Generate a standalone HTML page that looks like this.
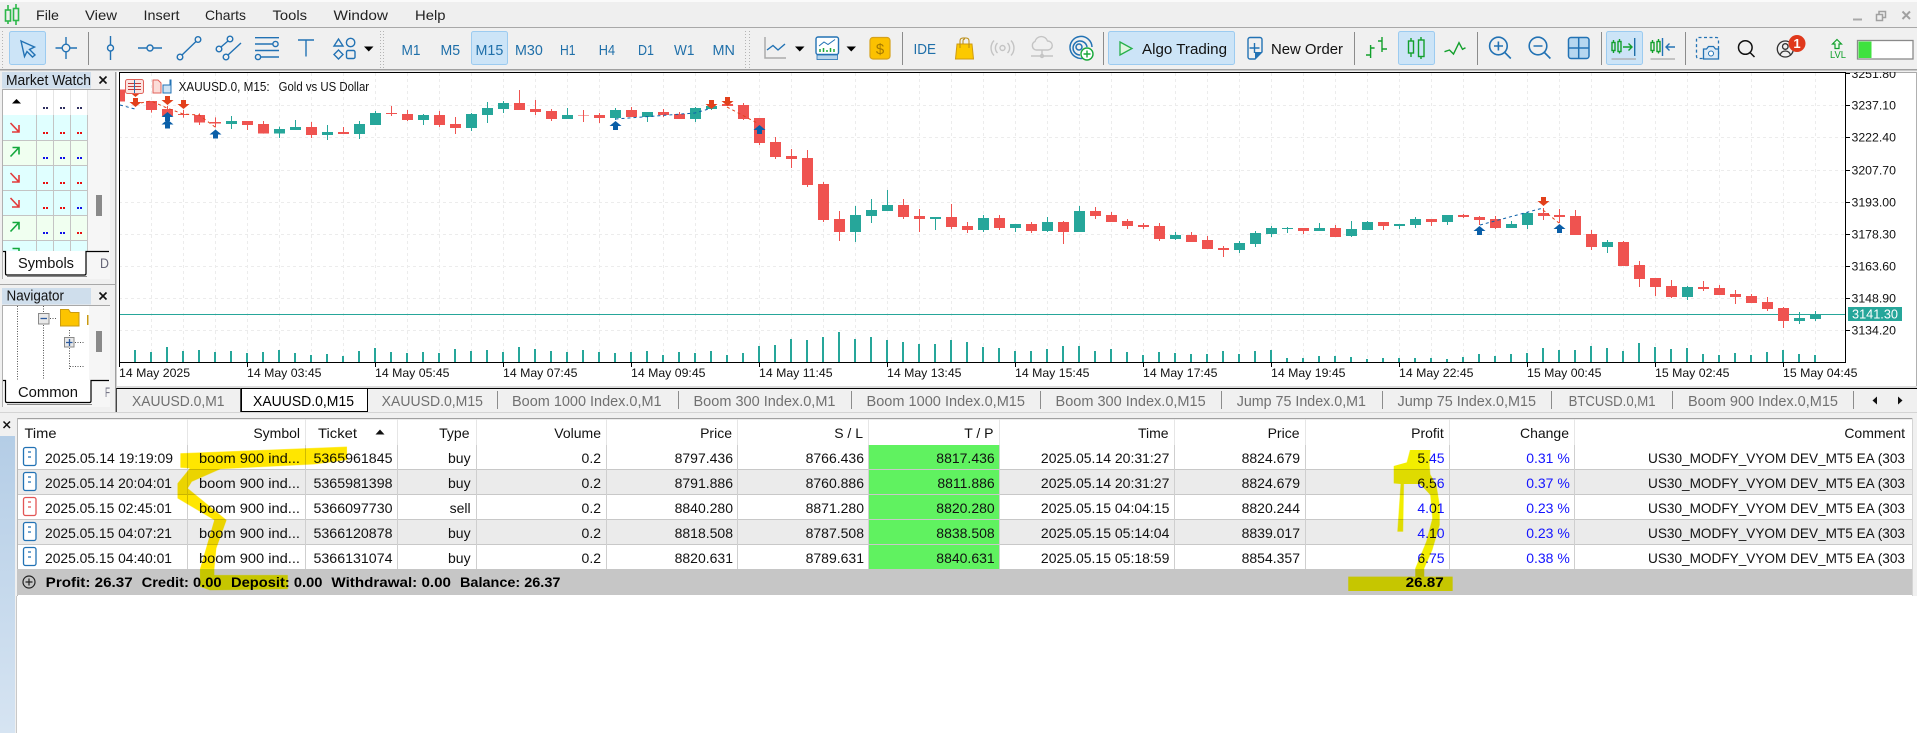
<!DOCTYPE html>
<html lang="en"><head><meta charset="utf-8"><title>MetaTrader 5</title>
<style>
html,body{margin:0;padding:0;background:#fff;overflow:hidden}
svg{display:block}
text{font-family:"Liberation Sans",sans-serif;font-size:14px;fill:#111}
.m{font-size:14px;fill:#222}
.tf{font-size:15px;fill:#1f6fa9}
.ax{font-size:12.3px;fill:#111}
.tab{font-size:14.5px;fill:#707070}
.r{text-anchor:end}
.b{font-weight:bold;fill:#000}
.p{fill:#1414ff}
.i{fill:none;stroke:#2272b4;stroke-width:1.4}
.g{fill:none;stroke:#12a02c;stroke-width:1.4}
</style></head><body>
<svg width="1917" height="733" viewBox="0 0 1917 733" xmlns="http://www.w3.org/2000/svg">
<defs>
<linearGradient id="lg" x1="0" y1="0" x2="0" y2="1"><stop offset="0" stop-color="#b4cde6"/><stop offset="1" stop-color="#d6e4f2"/></linearGradient>
<path id="ad" d="M-2.5 0h5v4h3.500l-6 5-6-5h3.500z" fill="#e2401b"/>
<path id="au" d="M-2.500 9h5v-4h3.500l-6-5-6 5h3.500z" fill="#0a5fa8"/>
<g id="db"><rect x="23.500" y="0.500" width="12.500" height="18" rx="2" fill="#fff" stroke="#2272b4" stroke-width="1.300"/><path d="M28 5h3M28 10h3" stroke="#2272b4" stroke-width="1.300"/></g>
<g id="dr"><rect x="23.500" y="0.500" width="12.500" height="18" rx="2" fill="#fff" stroke="#e25555" stroke-width="1.300"/><path d="M28 5h3M28 10h3" stroke="#e25555" stroke-width="1.300"/></g>
</defs>

<rect width="1917" height="733" fill="#f0f0f0"/>

<!-- chart -->
<rect x="117" y="72" width="1799" height="314" fill="#fff"/>
<g stroke="#ececec" stroke-width="1" stroke-dasharray="3 3">
<path d="M119 105.500H1845M119 137.500H1845M119 170.500H1845M119 202.500H1845M119 234.500H1845M119 266.500H1845M119 298.500H1845M119 330.500H1845"/>
<path d="M151.500 73V362M183.500 73V362M215.500 73V362M247.500 73V362M279.500 73V362M311.500 73V362M343.500 73V362M375.500 73V362M407.500 73V362M439.500 73V362M471.500 73V362M503.500 73V362M535.500 73V362M567.500 73V362M599.500 73V362M631.500 73V362M663.500 73V362M695.500 73V362M727.500 73V362M759.500 73V362M791.500 73V362M823.500 73V362M855.500 73V362M887.500 73V362M919.500 73V362M951.500 73V362M983.500 73V362M1015.500 73V362M1047.500 73V362M1079.500 73V362M1111.500 73V362M1143.500 73V362M1175.500 73V362M1207.500 73V362M1239.500 73V362M1271.500 73V362M1303.500 73V362M1335.500 73V362M1367.500 73V362M1399.500 73V362M1431.500 73V362M1463.500 73V362M1495.500 73V362M1527.500 73V362M1559.500 73V362M1591.500 73V362M1623.500 73V362M1655.500 73V362M1687.500 73V362M1719.500 73V362M1751.500 73V362M1783.500 73V362M1815.500 73V362"/>
</g>
<rect x="119" y="314" width="1726" height="1" fill="#26a69a"/>

<g transform="translate(0,70) scale(1,0.33333)" fill="none" shape-rendering="crispEdges">
<!-- volumes -->
<path stroke="#26a69a" stroke-width="2" d="M135 840V877M151 846V877M167 831V877M183 843V877M199 840V877M215 846V877M231 843V877M247 849V877M263 846V877M279 840V877M295 849V877M311 855V877M327 852V877M343 858V877M359 843V877M375 834V877M391 846V877M407 849V877M423 846V877M439 849V877M455 837V877M471 843V877M487 840V877M503 846V877M519 831V877M535 837V877M551 843V877M567 846V877M583 840V877M599 846V877M615 849V877M631 846V877M647 843V877M663 855V877M679 846V877M695 849V877M711 843V877M727 855V877M743 849V877M759 828V877M775 825V877M791 807V877M807 810V877M823 801V877M839 786V877M855 807V877M871 801V877M887 810V877M903 816V877M919 822V877M935 822V877M951 810V877M967 816V877M983 831V877M999 834V877M1015 843V877M1031 843V877M1047 837V877M1063 828V877M1079 828V877M1095 843V877M1111 837V877M1127 846V877M1143 855V877M1159 846V877M1175 849V877M1191 852V877M1207 852V877M1223 843V877M1239 852V877M1255 843V877M1271 840V877M1287 864V877M1303 864V877M1319 858V877M1335 858V877M1351 861V877M1367 867V877M1383 864V877M1399 864V877M1415 864V877M1431 864V877M1447 867V877M1463 861V877M1479 852V877M1495 858V877M1511 852V877M1527 849V877M1543 834V877M1559 840V877M1575 840V877M1591 828V877M1607 834V877M1623 843V877M1639 819V877M1655 831V877M1671 837V877M1687 834V877M1703 852V877M1719 855V877M1735 849V877M1751 855V877M1767 846V877M1783 840V877M1799 852V877M1815 855V877"/>
<!-- red wicks -->
<path stroke="#ef5350" stroke-width="1" d="M151.500 93V128M167.500 108V138M183.500 120V143M199.500 130V165M215.500 142V172M247.500 153V180M263.500 153V191M311.500 156V204M343.500 171V192M391.500 108V138M407.500 120V153M439.500 123V171M455.500 141V192M519.500 60V120M535.500 90V135M551.500 117V153M583.500 120V156M599.500 129V159M631.500 111V141M663.500 117V141M679.500 126V147M743.500 99V150M759.500 144V225M775.500 201V267M791.500 237V294M807.500 240V351M823.500 336V456M839.500 423V513M903.500 387V447M919.500 417V486M951.500 402V477M967.500 456V489M999.500 435V480M1031.500 456V489M1063.500 453V522M1095.500 411V447M1111.500 426V456M1127.500 447V477M1143.500 459V477M1159.500 459V513M1191.500 486V516M1207.500 498V537M1223.500 528V561M1303.500 474V492M1335.500 465V501M1383.500 456V480M1431.500 447V468M1463.500 432V444M1479.500 438V465M1495.500 438V477M1543.500 414V450M1559.500 417V459M1575.500 420V495M1591.500 480V540M1623.500 513V588M1639.500 573V651M1655.500 624V678M1671.500 630V684M1703.500 633V663M1719.500 645V675M1735.500 660V702M1751.500 672V699M1767.500 681V723M1783.500 711V774"/>
<!-- red bodies -->
<path stroke="#ef5350" stroke-width="11" d="M119.500 58V95M151.500 93V120M167.500 117V138M183.500 132V135M199.500 135V158M215.500 156V161M247.500 153V165M263.500 162V191M311.500 171V195M343.500 186V192M391.500 129V132M407.500 132V150M439.500 135V165M455.500 162V174M519.500 99V120M535.500 117V126M551.500 123V147M583.500 135V137M599.500 135V144M631.500 120V141M663.500 126V135M679.500 132V147M727.500 102V108M743.500 105V147M759.500 144V219M775.500 216V261M791.500 258V267M807.500 264V345M823.500 342V450M839.500 447V486M903.500 405V441M919.500 438V447M951.500 441V471M967.500 468V480M999.500 444V474M1031.500 462V483M1063.500 456V486M1095.500 423V438M1111.500 435V456M1127.500 453V468M1143.500 465V471M1159.500 468V507M1191.500 495V516M1207.500 510V537M1223.500 534V540M1303.500 474V483M1335.500 474V501M1383.500 456V468M1431.500 447V456M1463.500 435V441M1479.500 441V450M1495.500 447V474M1543.500 429V438M1559.500 435V441M1575.500 438V495M1591.500 492V531M1623.500 516V588M1639.500 585V627M1655.500 624V651M1671.500 648V681M1703.500 651V657M1719.500 654V675M1735.500 672V681M1751.500 678V699M1767.500 696V717M1783.500 714V753"/>
<!-- green wicks -->
<path stroke="#26a69a" stroke-width="1" d="M231.500 138V177M279.500 170V204M295.500 150V180M327.500 165V210M359.500 153V207M375.500 123V165M423.500 132V165M471.500 129V183M487.500 96V159M503.500 93V129M567.500 114V147M615.500 114V150M647.500 126V156M695.500 111V156M711.500 105V120M855.500 408V516M871.500 387V459M887.500 360V423M935.500 441V480M983.500 435V486M1015.500 462V486M1047.500 441V486M1079.500 408V486M1175.500 486V510M1239.500 513V549M1255.500 483V531M1271.500 468V501M1287.500 471V489M1319.500 459V483M1351.500 453V501M1367.500 453V480M1399.500 462V477M1415.500 441V474M1447.500 435V465M1511.500 453V474M1527.500 426V477M1607.500 510V549M1687.500 648V690M1799.500 726V762M1815.500 723V753"/>
<!-- green bodies -->
<path stroke="#26a69a" stroke-width="11" d="M231.500 153V162M279.500 177V191M295.500 171V180M327.500 186V195M359.500 162V192M375.500 129V165M423.500 135V150M471.500 132V174M487.500 114V135M503.500 99V117M567.500 135V147M615.500 120V144M647.500 126V141M695.500 114V147M711.500 108V117M855.500 435V486M871.500 420V438M887.500 405V423M935.500 441V447M983.500 444V480M1015.500 462V474M1047.500 456V483M1079.500 423V486M1175.500 495V507M1239.500 519V540M1255.500 489V522M1271.500 474V492M1287.500 474V477M1319.500 474V483M1351.500 477V498M1367.500 456V480M1399.500 462V468M1415.500 447V465M1447.500 435V456M1511.500 462V474M1527.500 429V465M1607.500 516V531M1687.500 651V681M1799.500 744V753M1815.500 735V747"/>
</g>

<!-- trade dashes -->
<g fill="none" stroke-width="1" stroke-dasharray="3 3">
<path stroke="#0a5fa8" d="M120 105L135 109M615.500 119L695 113L712 108M1480 225L1543 208"/>
<path stroke="#e2401b" d="M135 104L151 101L167 108L183 114L199 115L215 127M727 107L759 124M1543 210L1559 223"/>
</g>
<!-- trade arrows -->
<use href="#ad" x="135.500" y="88"/><use href="#ad" x="135.500" y="98"/><use href="#ad" x="167.500" y="96"/><use href="#ad" x="183.500" y="100"/><use href="#ad" x="711.500" y="100"/><use href="#ad" x="727.500" y="97"/><use href="#ad" x="1543.500" y="197"/>
<use href="#au" x="167.500" y="112"/><use href="#au" x="167.500" y="119.500"/><use href="#au" x="215.500" y="129.500"/><use href="#au" x="615.500" y="121"/><use href="#au" x="759.500" y="125"/><use href="#au" x="1479.500" y="226"/><use href="#au" x="1559.500" y="224"/>

<!-- frame -->
<rect x="116" y="72" width="3" height="316" fill="#fff"/>
<rect x="115" y="72" width="1.500" height="340" fill="#a0a0a0"/>
<rect x="119" y="72" width="1" height="290" fill="#000"/>
<rect x="119" y="72" width="1726" height="1" fill="#000"/>
<rect x="1845" y="72" width="1" height="291" fill="#000"/>
<rect x="119" y="362" width="1727" height="1" fill="#000"/>
<path stroke="#000" d="M119.500 362V367M247.500 362V367M375.500 362V367M503.500 362V367M631.500 362V367M759.500 362V367M887.500 362V367M1015.500 362V367M1143.500 362V367M1271.500 362V367M1399.500 362V367M1527.500 362V367M1655.500 362V367M1783.500 362V367M1845 73.500H1850M1845 105.500H1850M1845 137.500H1850M1845 170.500H1850M1845 202.500H1850M1845 234.500H1850M1845 266.500H1850M1845 298.500H1850M1845 330.500H1850"/>
<rect x="1846" y="72" width="70" height="1" fill="#a8a8a8"/>
<rect x="1916" y="72" width="1" height="314" fill="#b0b0b0"/>
<rect x="117" y="386" width="1800" height="2" fill="#dcdcdc"/>

<!-- axis labels -->
<text class="ax" x="1851.500" y="78">3251.80</text><text class="ax" x="1851.500" y="109.500">3237.10</text><text class="ax" x="1851.500" y="141.500">3222.40</text><text class="ax" x="1851.500" y="174.500">3207.70</text><text class="ax" x="1851.500" y="206.500">3193.00</text><text class="ax" x="1851.500" y="238.500">3178.30</text><text class="ax" x="1851.500" y="270.500">3163.60</text><text class="ax" x="1851.500" y="302.500">3148.90</text><text class="ax" x="1851.500" y="334.500">3134.20</text>
<text class="ax" x="119" y="377">14 May 2025</text><text class="ax" x="247" y="377">14 May 03:45</text><text class="ax" x="375" y="377">14 May 05:45</text><text class="ax" x="503" y="377">14 May 07:45</text><text class="ax" x="631" y="377">14 May 09:45</text><text class="ax" x="759" y="377">14 May 11:45</text><text class="ax" x="887" y="377">14 May 13:45</text><text class="ax" x="1015" y="377">14 May 15:45</text><text class="ax" x="1143" y="377">14 May 17:45</text><text class="ax" x="1271" y="377">14 May 19:45</text><text class="ax" x="1399" y="377">14 May 22:45</text><text class="ax" x="1527" y="377">15 May 00:45</text><text class="ax" x="1655" y="377">15 May 02:45</text><text class="ax" x="1783" y="377">15 May 04:45</text>
<rect x="1848" y="307" width="54" height="14" fill="#26a69a"/>
<text x="1852" y="318.500" style="font-size:13px;fill:#fff" textLength="46" lengthAdjust="spacingAndGlyphs">3141.30</text>

<!-- chart title -->
<rect x="125.500" y="79.500" width="18" height="14" rx="2" fill="#fbe3e0" stroke="#e0625a"/>
<path d="M128 83.500h13M128 86.500h13M128 89.500h13" stroke="#c23a3a"/><path d="M134.500 80v13" stroke="#2272b4"/>
<path d="M153 80h5l3 3v10h-8z" fill="#fbdcd8" stroke="#e0625a"/><path d="M163 85h7V80h1v13h-8z" fill="#cfe3f4" stroke="#2272b4"/>
<text x="178.600" y="91" style="font-size:13px" textLength="91" lengthAdjust="spacingAndGlyphs">XAUUSD.0, M15:</text>
<text x="278.600" y="91" style="font-size:13px" textLength="90.500" lengthAdjust="spacingAndGlyphs">Gold vs US Dollar</text>

<!-- menu -->
<rect width="1917" height="2" fill="#fafafa"/>
<rect y="2" width="1917" height="25" fill="#efefef"/>
<rect y="27" width="1917" height="1" fill="#a8a8a8"/>
<g fill="none" stroke="#2db84a" stroke-width="1.600">
<rect x="5.500" y="10" width="5" height="11"/><path d="M8 5v5M8 21v3"/>
<rect x="13.500" y="8.500" width="5" height="12"/><path d="M16 4v4M16 21v4"/>
</g>
<text class="m" x="36" y="20" textLength="23" lengthAdjust="spacingAndGlyphs">File</text><text class="m" x="85" y="20" textLength="32" lengthAdjust="spacingAndGlyphs">View</text><text class="m" x="143.500" y="20" textLength="36" lengthAdjust="spacingAndGlyphs">Insert</text><text class="m" x="205" y="20" textLength="41" lengthAdjust="spacingAndGlyphs">Charts</text><text class="m" x="272.500" y="20" textLength="34.500" lengthAdjust="spacingAndGlyphs">Tools</text><text class="m" x="333.500" y="20" textLength="54.500" lengthAdjust="spacingAndGlyphs">Window</text><text class="m" x="415" y="20" textLength="30.500" lengthAdjust="spacingAndGlyphs">Help</text>
<!-- window controls -->
<rect x="1853" y="18.500" width="9" height="2" fill="#a8a8a8"/>
<path d="M1876.500 14.500h6v6h-6zM1879 14v-2.500h6.500v6H1883" fill="none" stroke="#a0a0a0" stroke-width="1.500"/>
<path d="M1902.500 11.500l7.500 7.500M1910 11.500l-7.500 7.500" stroke="#a0a0a0" stroke-width="2"/>

<!-- toolbar -->
<rect y="28" width="1917" height="41" fill="#f0f0f0"/>
<rect y="69" width="1917" height="1.500" fill="#a0a0a0"/>
<rect y="70.500" width="1917" height="1.500" fill="#f0f0f0"/>
<path d="M2.500 31V68M380.500 31V68M383.500 31V68M745.500 31V68M749.500 31V68" stroke="#b4b4b4" stroke-dasharray="1 2"/>
<g fill="#cce4f7" stroke="#9ccbf0">
<rect x="9.500" y="31.500" width="36" height="33" rx="2"/><rect x="471.500" y="31.500" width="36" height="33" rx="2"/><rect x="1108.500" y="31.500" width="126" height="33" rx="2"/><rect x="1398.500" y="31.500" width="36" height="33" rx="2"/><rect x="1606.500" y="31.500" width="36" height="33" rx="2"/>
</g>
<path d="M88.500 32V65M902.500 32V65M1103.500 32V65M1354.500 32V65M1477.500 32V65M1601.500 32V65M1685.500 32V65" stroke="#8c8c8c"/>

<path class="i" d="M21 41L34.500 47L29.500 49.500L35 55L32.500 57L27 51.500L24.500 56.500Z"/>
<g class="i"><path d="M55.500 48H62M70 48h7M66 37v7M66 52v7"/><circle cx="66" cy="48" r="3.800"/></g>
<g class="i"><path d="M110.500 36v9M110.500 51v9"/><circle cx="110.500" cy="48" r="3"/></g>
<g class="i"><path d="M138 48h9M153 48h9"/><circle cx="150" cy="48" r="3"/></g>
<g class="i"><path d="M182 55L196 41.500"/><circle cx="180" cy="57" r="2.800"/><circle cx="198" cy="39.500" r="2.800"/></g>
<g class="i"><path d="M221 47L228 41M228 55L241 43"/><circle cx="219" cy="49" r="2.800"/><circle cx="230" cy="39" r="2.800"/><circle cx="226" cy="57" r="2.800"/></g>
<g class="i"><path d="M255 37.700h24M255 44h18M255 50.500h24M261 57h18"/><circle cx="275.500" cy="44" r="2.600"/><circle cx="258" cy="57" r="2.600"/></g>
<path class="i" d="M298 40h16M306 40v16.500"/>
<g class="i"><path d="M338.500 39l4.500 7h-9z"/><circle cx="350.600" cy="42.500" r="4.200"/><path d="M338.500 50l4.500 4.500-4.500 4.500-4.500-4.500z"/><rect x="346.500" y="50.500" width="8.500" height="8" rx="1.500"/></g>
<path d="M364 46.500h9.500l-4.750 5z" fill="#000"/>

<text class="tf" x="401.500" y="55" textLength="19" lengthAdjust="spacingAndGlyphs">M1</text><text class="tf" x="440.500" y="55" textLength="19.600" lengthAdjust="spacingAndGlyphs">M5</text><text class="tf" x="475.500" y="55" textLength="27.800" lengthAdjust="spacingAndGlyphs">M15</text><text class="tf" x="515" y="55" textLength="27.800" lengthAdjust="spacingAndGlyphs">M30</text><text class="tf" x="560" y="55" textLength="15.500" lengthAdjust="spacingAndGlyphs">H1</text><text class="tf" x="598.800" y="55" textLength="16.300" lengthAdjust="spacingAndGlyphs">H4</text><text class="tf" x="638" y="55" textLength="16" lengthAdjust="spacingAndGlyphs">D1</text><text class="tf" x="674" y="55" textLength="20.400" lengthAdjust="spacingAndGlyphs">W1</text><text class="tf" x="712.500" y="55" textLength="22.400" lengthAdjust="spacingAndGlyphs">MN</text>

<path d="M765 37v21h21" fill="none" stroke="#aaa" stroke-width="1.500"/><path class="i" d="M767 50l6-4.500 5 4.500 7-6"/>
<path d="M795 46.500h9.500l-4.750 5z" fill="#000"/>
<rect x="816" y="37" width="22.500" height="17.500" rx="2" fill="#fff" stroke="#2272b4" stroke-width="1.400"/>
<rect x="817" y="55" width="20.500" height="4.500" fill="#b8d4ea" stroke="#2272b4" stroke-width=".8"/>
<path d="M819 46l5-4 4 2.500 7-5" fill="none" stroke="#2272b4"/><path d="M820 52v-3M823.500 52v-4M827 52v-2M830.500 52v-4M834 52v-3" stroke="#20a83c" stroke-width="1.500"/>
<path d="M846.500 46.500h9.500l-4.750 5z" fill="#000"/>
<rect x="870" y="37.500" width="20" height="21.500" rx="3" fill="#fcc100" stroke="#d6a21b" stroke-width="1.200"/>
<text x="880" y="54" text-anchor="middle" style="font-size:15px;fill:#a67a00">$</text>
<text x="913.500" y="54" style="font-size:14.500px;fill:#1f6fa9" textLength="22.500" lengthAdjust="spacingAndGlyphs">IDE</text>
<path d="M957 44h15l1.500 15h-18z" fill="#fcc900" stroke="#cf9b12"/><path d="M960 48v-7q0-3 3-3h3q3 0 3 3v7M963 44v-3q0-2 2-2" fill="none" stroke="#b88a10"/>
<g fill="none" stroke="#c4c4c4" stroke-width="1.400"><circle cx="1002.500" cy="48" r="2.500"/><path d="M997.500 43a7 7 0 0 0 0 10M1007.500 43a7 7 0 0 1 0 10M994 40.500a11 11 0 0 0 0 15M1011 40.500a11 11 0 0 1 0 15"/></g>
<g fill="none" stroke="#c4c4c4" stroke-width="1.400"><path d="M1036 50a4.500 4.500 0 0 1-1-8.500 6.500 6.500 0 0 1 12.500-.500 4.500 4.500 0 0 1 0.500 9z"/><path d="M1042 50v5M1031 56h22"/><circle cx="1042" cy="56" r="1.500"/></g>
<g fill="none" stroke="#2272b4" stroke-width="1.500"><path d="M1084 58a11 11 0 1 1 8-11"/><path d="M1080 55a7 7 0 1 1 7-8"/><circle cx="1079" cy="47" r="3"/></g>
<circle cx="1087" cy="54" r="6" fill="#fff" stroke="#18a83a" stroke-width="1.400"/><path d="M1083.500 54h7M1087 50.500v7" stroke="#18a83a" stroke-width="1.400"/>
<path d="M1120 42l12 6.500-12 6.500z" fill="#dff5df" stroke="#27b04a" stroke-width="1.300"/>
<text x="1142" y="54" style="font-size:14.500px;fill:#111" textLength="85" lengthAdjust="spacingAndGlyphs">Algo Trading</text>
<path class="i" d="M1250 37.500h10a2 2 0 0 1 2 2V52l-7 7h-5a2 2 0 0 1-2-2V39.500a2 2 0 0 1 2-2zM1254.500 43v10M1249.500 48h10" fill="#fff"/>
<path d="M1262 52l-7 7v-7z" fill="#2272b4"/>
<text x="1271" y="54" style="font-size:14.500px;fill:#111" textLength="72" lengthAdjust="spacingAndGlyphs">New Order</text>

<g class="g"><path d="M1370.600 45v13M1366 55h4.600M1370.600 48h4M1382 37v15M1378 41h4M1382 49h5"/></g>
<g class="g"><rect x="1408.500" y="41" width="5" height="12"/><path d="M1411 38v3M1411 53v4"/><rect x="1418.500" y="40" width="5.500" height="16.500"/><path d="M1421 37v3M1421 56.500v2.500"/></g>
<path class="g" d="M1444.500 51.700l5-1.700 4 4 5.500-11.300 3.500 6.600 3-1.600"/>
<g class="i" style="stroke-width:1.600"><circle cx="1498.400" cy="46" r="8.800"/><path d="M1504.800 52.500l6 6M1494 46h9M1498.400 41.500v9"/></g>
<g class="i" style="stroke-width:1.600"><circle cx="1538" cy="46" r="8.800"/><path d="M1544.400 52.500l6 6M1533.500 46h9"/></g>
<rect x="1568.500" y="37.500" width="20.500" height="21" rx="2.500" fill="#b6d7f0" stroke="#2272b4" stroke-width="1.500"/><path d="M1578.700 38v20M1569 48h20" stroke="#2272b4" stroke-width="1.500"/>
<g class="g"><rect x="1612" y="42.500" width="3" height="8"/><path d="M1613.500 40v2.500M1613.500 50.500v2.500"/><rect x="1618" y="41.500" width="3" height="10"/><path d="M1619.500 39v2.500M1619.500 51.500v2"/><path d="M1623 47h9M1628.500 43.500l3.500 3.500-3.500 3.500"/></g>
<path d="M1634.700 38v18" stroke="#1f6fa9" stroke-width="1.400"/><path d="M1611.500 59h24.500M1650.500 59h24.500" stroke="#a8a8a8" stroke-width="1.200"/>
<g class="g"><rect x="1651" y="42.500" width="3" height="8"/><path d="M1652.500 40v2.500M1652.500 50.500v2.500"/><rect x="1657" y="41.500" width="3" height="10"/><path d="M1658.500 39v2.500M1658.500 51.500v2"/></g>
<path class="i" d="M1662.500 38v18M1675 47h-9M1669.500 43.500l-3.500 3.500 3.500 3.500"/>
<rect x="1696.500" y="37.500" width="22" height="21" rx="2" fill="none" stroke="#2272b4" stroke-width="1.300" stroke-dasharray="3 2.500"/>
<path d="M1703.500 49h3l2-2.500h5l2 2.500h3v10h-15z" fill="#ddeaf5" stroke="#2272b4" stroke-width="1.300"/><circle cx="1711" cy="53.500" r="2.500" fill="#fff" stroke="#2272b4"/>
<g fill="none" stroke="#111" stroke-width="1.500"><circle cx="1745.300" cy="47.500" r="6.800"/><path d="M1750 52.500l4.500 4.500"/></g>
<g fill="none" stroke="#333" stroke-width="1.300"><circle cx="1785.300" cy="49" r="8"/><circle cx="1785.300" cy="46.500" r="2.800"/><path d="M1780 55.500q1-4.500 5.300-4.500t5.300 4.500"/></g>
<circle cx="1797" cy="43.500" r="8.500" fill="#e0391c"/>
<text x="1797" y="48" text-anchor="middle" style="font-size:13px;font-weight:bold;fill:#fff">1</text>
<path d="M1837 39.500l4.500 4.500h-2.500v4.500h-4V44h-2.500z" fill="#eafbea" stroke="#12a02c" stroke-width="1.200"/>
<text x="1830" y="58" style="font-size:10px;fill:#12a02c" textLength="16" lengthAdjust="spacingAndGlyphs">LVL</text>
<rect x="1857.500" y="40.500" width="55.500" height="18.500" fill="#fff" stroke="#8a8a8a" stroke-width="1.300"/>
<rect x="1858.500" y="41.500" width="13" height="16.500" fill="#3fe23f"/>

<!-- Market Watch panel -->
<rect x="0" y="72" width="115" height="340" fill="#f0f0f0"/>
<rect x="2" y="72" width="89" height="16.500" fill="#cfdeec"/>
<text x="6" y="85" style="font-size:14.500px" textLength="85" lengthAdjust="spacingAndGlyphs">Market Watch</text>
<path d="M99.500 76.500l7 7M106.500 76.500l-7 7" stroke="#111" stroke-width="1.600"/>
<rect x="2" y="89" width="108" height="190" fill="#f6f6f6"/>
<rect x="2" y="89" width="108" height="1" fill="#a8a8a8"/>
<rect x="2" y="89" width="1" height="190" fill="#b0b0b0"/>
<rect x="3" y="90" width="85" height="25" fill="#fff"/>
<rect x="3" y="115" width="85" height="25" fill="#e0ffff"/>
<rect x="3" y="140" width="85" height="25" fill="#f0fff0"/>
<rect x="3" y="165" width="85" height="25" fill="#e0ffff"/>
<rect x="3" y="190" width="85" height="25" fill="#e0ffff"/>
<rect x="3" y="215" width="85" height="25" fill="#f0fff0"/>
<rect x="3" y="240" width="85" height="11" fill="#e0ffff"/>
<path d="M3 140.500H88M3 165.500H88M3 190.500H88M3 215.500H88M3 240.500H88M36.500 115V251M53.500 115V251M70.500 115V251M87.500 115V251" stroke="#c4c4c4"/>
<path d="M36.500 90V115M53.500 90V115M70.500 90V115M87.500 90V115" stroke="#e4e4e4"/>
<path d="M16.500 99l4.500 4.500h-9z" fill="#000"/>
<g fill="none" stroke-width="1.600">
<path stroke="#e23a3a" d="M10.500 123L18.500 131.500M19 125v7h-7"/>
<path stroke="#12a83c" d="M10.500 156.500L18.500 148M12.500 147.500h6.500v7"/>
<path stroke="#e23a3a" d="M10.500 173L18.500 181.500M19 175v7h-7"/>
<path stroke="#e23a3a" d="M10.500 198L18.500 206.500M19 200v7h-7"/>
<path stroke="#12a83c" d="M10.500 231.500L18.500 223M12.500 222.500h6.500v7"/>
<path stroke="#12a83c" d="M12.500 248.500h6.500v3"/>
</g>
<path d="M43 107h2v2h-2zM46 107h2v2h-2zM60 107h2v2h-2zM63 107h2v2h-2zM77 107h2v2h-2zM80 107h2v2h-2z" fill="#303060"/>
<path d="M43 132h2v2h-2zM46 132h2v2h-2zM60 132h2v2h-2zM63 132h2v2h-2zM77 132h2v2h-2zM80 132h2v2h-2zM43 182h2v2h-2zM46 182h2v2h-2zM60 182h2v2h-2zM63 182h2v2h-2zM77 182h2v2h-2zM80 182h2v2h-2zM43 207h2v2h-2zM46 207h2v2h-2zM60 207h2v2h-2zM63 207h2v2h-2zM77 232h2v2h-2zM80 232h2v2h-2z" fill="#e81010"/>
<path d="M43 157h2v2h-2zM46 157h2v2h-2zM60 157h2v2h-2zM63 157h2v2h-2zM77 157h2v2h-2zM80 157h2v2h-2zM77 207h2v2h-2zM80 207h2v2h-2zM43 232h2v2h-2zM46 232h2v2h-2zM60 232h2v2h-2zM63 232h2v2h-2z" fill="#1010e8"/>
<rect x="96" y="195" width="6" height="21" fill="#8a8a8a"/>
<path d="M5 251h81v22.500q0 1.500-1.500 1.500H6.500q-1.500 0-1.500-1.500z" fill="#fff"/>
<path d="M3 251.500H5.500V273.500q0 1.500 1.500 1.500H84.500q1.500 0 1.500-1.500V251.500H109" fill="none" stroke="#000" stroke-width="1.200"/>
<path d="M7 276.500H87" stroke="#888"/>
<text x="18" y="268" style="font-size:15px" textLength="56" lengthAdjust="spacingAndGlyphs">Symbols</text>
<text x="100" y="268" style="font-size:14px;fill:#667" textLength="9" lengthAdjust="spacingAndGlyphs">D</text>
<rect x="0" y="284" width="115" height="1" fill="#a8a8a8"/>

<!-- Navigator panel -->
<rect x="2" y="288" width="89" height="16.500" fill="#cfdeec"/>
<text x="6.500" y="300.500" style="font-size:14.500px" textLength="57.500" lengthAdjust="spacingAndGlyphs">Navigator</text>
<path d="M99.500 292.500l7 7M106.500 292.500l-7 7" stroke="#111" stroke-width="1.600"/>
<rect x="2" y="305" width="108" height="102" fill="#f6f6f6"/>
<rect x="2" y="305" width="108" height="1" fill="#a8a8a8"/>
<rect x="2" y="305" width="1" height="102" fill="#b0b0b0"/>
<rect x="3" y="306" width="86" height="74" fill="#fff"/>
<path d="M17.500 306V380M43.500 306V313M43.500 325V380M69.500 330V337M69.500 348V370M50 318.500H56M75 342.500H84M70 366.500H84" stroke="#555" stroke-dasharray="1 1.500" fill="none"/>
<rect x="38.500" y="313.500" width="10.500" height="10.500" fill="#e8e8e8" stroke="#8a8a8a"/><path d="M40.500 318.500h6.500" stroke="#2b5a9e" stroke-width="1.300"/>
<path d="M60.500 309.500h8l2 3h8.500v13.500h-18.500z" fill="#fcc400" stroke="#c99a10"/>
<rect x="87" y="315" width="1.500" height="10" fill="#c99a10"/>
<rect x="64.500" y="337.500" width="9.500" height="9.500" fill="#e8e8e8" stroke="#8a8a8a"/><path d="M66 342.500h6.500M69.500 339v7" stroke="#2b5a9e" stroke-width="1.300"/>
<rect x="96" y="331" width="6" height="21" fill="#8a8a8a"/>
<path d="M5 380h86v21q0 1.500-1.500 1.500H6.500q-1.500 0-1.500-1.500z" fill="#fff"/>
<path d="M3 380.500H5.500V401q0 1.500 1.500 1.500H89.500q1.500 0 1.500-1.500V380.500H109" fill="none" stroke="#000" stroke-width="1.200"/>
<path d="M7 404.500H92" stroke="#888"/>
<text x="18" y="397" style="font-size:15px" textLength="60" lengthAdjust="spacingAndGlyphs">Common</text>
<text x="105" y="397" style="font-size:14px;fill:#778" textLength="5" lengthAdjust="spacingAndGlyphs">F</text>

<!-- tab bar -->
<rect x="116" y="388" width="1801" height="24" fill="#f0f0f0"/>
<rect x="116" y="388" width="1801" height="1" fill="#000"/>
<path d="M116.500 388.500V412M240.500 388.500V412" stroke="#444"/>
<rect x="241.500" y="388.500" width="126" height="23" fill="#fff" stroke="#000"/>
<path d="M497.500 391V409M678.500 391V409M851.500 391V409M1040.500 391V409M1221.500 391V409M1382.500 391V409M1551.500 391V409M1672.500 391V409M1853.500 391V409" stroke="#8c8c8c"/>
<text class="tab" x="132" y="406" textLength="92.500" lengthAdjust="spacingAndGlyphs">XAUUSD.0,M1</text>
<text x="253" y="406" style="fill:#000;font-size:14.500px" textLength="101" lengthAdjust="spacingAndGlyphs">XAUUSD.0,M15</text>
<text class="tab" x="381.600" y="406" textLength="101.400" lengthAdjust="spacingAndGlyphs">XAUUSD.0,M15</text>
<text class="tab" x="512" y="406" textLength="149.600" lengthAdjust="spacingAndGlyphs">Boom 1000 Index.0,M1</text>
<text class="tab" x="693.500" y="406" textLength="142" lengthAdjust="spacingAndGlyphs">Boom 300 Index.0,M1</text>
<text class="tab" x="866.500" y="406" textLength="158.500" lengthAdjust="spacingAndGlyphs">Boom 1000 Index.0,M15</text>
<text class="tab" x="1055.500" y="406" textLength="150.200" lengthAdjust="spacingAndGlyphs">Boom 300 Index.0,M15</text>
<text class="tab" x="1236.700" y="406" textLength="129.300" lengthAdjust="spacingAndGlyphs">Jump 75 Index.0,M1</text>
<text class="tab" x="1397.500" y="406" textLength="138.500" lengthAdjust="spacingAndGlyphs">Jump 75 Index.0,M15</text>
<text class="tab" x="1568.600" y="406" textLength="87" lengthAdjust="spacingAndGlyphs">BTCUSD.0,M1</text>
<text class="tab" x="1688" y="406" textLength="150" lengthAdjust="spacingAndGlyphs">Boom 900 Index.0,M15</text>
<path d="M1877 396.500v8l-4.500-4zM1898 396.500v8l4.500-4z" fill="#111"/>
<rect x="0" y="412" width="1917" height="1" fill="#d4d4d4"/>

<!-- bottom left strip -->
<path d="M3.500 421.500l6.500 6.500M10 421.500l-6.500 6.500" stroke="#111" stroke-width="1.500"/>
<rect x="0" y="436" width="15" height="297" fill="url(#lg)"/>

<!-- table -->
<rect x="17" y="418" width="1895" height="315" fill="#fff"/>
<rect x="1912" y="596" width="5" height="137" fill="#fff"/>
<rect x="17" y="418" width="1895" height="1.200" fill="#a0a0a0"/>
<rect x="17" y="418" width="1" height="178" fill="#b8b8b8"/>
<rect x="16" y="596" width="1" height="137" fill="#c8c8c8"/>
<rect x="1912" y="418" width="1" height="178" fill="#d4d4d4"/>
<rect x="18" y="470" width="1894" height="24" fill="#ebebeb"/>
<rect x="18" y="520" width="1894" height="24" fill="#ebebeb"/>
<rect x="869" y="445" width="130.500" height="124" fill="#60f260"/>
<path d="M18 469.500H1912M18 494.500H1912M18 519.500H1912M18 544.500H1912" stroke="#c8c8c8"/>
<path d="M187.500 445V569M305.500 445V569M397.500 445V569M476.500 445V569M606.500 445V569M737.500 445V569M868.500 445V569M999.500 445V569M1174.500 445V569M1305.500 445V569M1449.500 445V569M1574.500 445V569" stroke="#cfcfcf"/>
<path d="M187.500 419V445M305.500 419V445M397.500 419V445M476.500 419V445M606.500 419V445M737.500 419V445M868.500 419V445M999.500 419V445M1174.500 419V445M1305.500 419V445M1449.500 419V445M1574.500 419V445" stroke="#e6e6e6"/>
<rect x="17" y="569" width="1895" height="26" fill="#c6c6c6"/>

<!-- header -->
<text x="24.500" y="438" textLength="32" lengthAdjust="spacingAndGlyphs">Time</text>
<text class="r" x="300" y="438">Symbol</text>
<text x="318" y="438" textLength="39" lengthAdjust="spacingAndGlyphs">Ticket</text>
<path d="M375.500 434.500l4.500-5 4.500 5z" fill="#111"/>
<text class="r" x="469.500" y="438">Type</text>
<text class="r" x="601" y="438">Volume</text>
<text class="r" x="732" y="438">Price</text>
<text class="r" x="863" y="438">S / L</text>
<text class="r" x="993.500" y="438">T / P</text>
<text class="r" x="1168.600" y="438">Time</text>
<text class="r" x="1299.500" y="438">Price</text>
<text class="r" x="1443.800" y="438">Profit</text>
<text class="r" x="1569" y="438">Change</text>
<text class="r" x="1905" y="438">Comment</text>

<!-- rows -->
<use href="#db" x="0" y="447"/><use href="#db" x="0" y="472"/><use href="#dr" x="0" y="497"/><use href="#db" x="0" y="522"/><use href="#db" x="0" y="547"/>

<text x="45" y="463" textLength="128" lengthAdjust="spacingAndGlyphs">2025.05.14 19:19:09</text><text x="199" y="463" textLength="101" lengthAdjust="spacingAndGlyphs">boom 900 ind...</text><text x="313.500" y="463" textLength="79" lengthAdjust="spacingAndGlyphs">5365961845</text><text class="r" x="470.600" y="463">buy</text><text class="r" x="601" y="463">0.2</text><text class="r" x="733" y="463">8797.436</text><text class="r" x="864" y="463">8766.436</text><text class="r" x="994.700" y="463">8817.436</text><text class="r" x="1169.400" y="463">2025.05.14 20:31:27</text><text class="r" x="1300" y="463">8824.679</text><text class="r p" x="1444.600" y="463">5.45</text><text class="r p" x="1569.800" y="463">0.31 %</text><text x="1648" y="463" textLength="257" lengthAdjust="spacingAndGlyphs">US30_MODFY_VYOM DEV_MT5 EA (303</text>

<text x="45" y="488" textLength="127" lengthAdjust="spacingAndGlyphs">2025.05.14 20:04:01</text><text x="199" y="488" textLength="101" lengthAdjust="spacingAndGlyphs">boom 900 ind...</text><text x="313.500" y="488" textLength="79" lengthAdjust="spacingAndGlyphs">5365981398</text><text class="r" x="470.600" y="488">buy</text><text class="r" x="601" y="488">0.2</text><text class="r" x="733" y="488">8791.886</text><text class="r" x="864" y="488">8760.886</text><text class="r" x="994.700" y="488">8811.886</text><text class="r" x="1169.400" y="488">2025.05.14 20:31:27</text><text class="r" x="1300" y="488">8824.679</text><text class="r p" x="1444.600" y="488">6.56</text><text class="r p" x="1569.800" y="488">0.37 %</text><text x="1648" y="488" textLength="257" lengthAdjust="spacingAndGlyphs">US30_MODFY_VYOM DEV_MT5 EA (303</text>

<text x="45" y="513" textLength="127" lengthAdjust="spacingAndGlyphs">2025.05.15 02:45:01</text><text x="199" y="513" textLength="101" lengthAdjust="spacingAndGlyphs">boom 900 ind...</text><text x="313.500" y="513" textLength="79" lengthAdjust="spacingAndGlyphs">5366097730</text><text class="r" x="470.600" y="513">sell</text><text class="r" x="601" y="513">0.2</text><text class="r" x="733" y="513">8840.280</text><text class="r" x="864" y="513">8871.280</text><text class="r" x="994.700" y="513">8820.280</text><text class="r" x="1169.400" y="513">2025.05.15 04:04:15</text><text class="r" x="1300" y="513">8820.244</text><text class="r p" x="1444.600" y="513">4.01</text><text class="r p" x="1569.800" y="513">0.23 %</text><text x="1648" y="513" textLength="257" lengthAdjust="spacingAndGlyphs">US30_MODFY_VYOM DEV_MT5 EA (303</text>

<text x="45" y="538" textLength="127" lengthAdjust="spacingAndGlyphs">2025.05.15 04:07:21</text><text x="199" y="538" textLength="101" lengthAdjust="spacingAndGlyphs">boom 900 ind...</text><text x="313.500" y="538" textLength="79" lengthAdjust="spacingAndGlyphs">5366120878</text><text class="r" x="470.600" y="538">buy</text><text class="r" x="601" y="538">0.2</text><text class="r" x="733" y="538">8818.508</text><text class="r" x="864" y="538">8787.508</text><text class="r" x="994.700" y="538">8838.508</text><text class="r" x="1169.400" y="538">2025.05.15 05:14:04</text><text class="r" x="1300" y="538">8839.017</text><text class="r p" x="1444.600" y="538">4.10</text><text class="r p" x="1569.800" y="538">0.23 %</text><text x="1648" y="538" textLength="257" lengthAdjust="spacingAndGlyphs">US30_MODFY_VYOM DEV_MT5 EA (303</text>

<text x="45" y="563" textLength="127" lengthAdjust="spacingAndGlyphs">2025.05.15 04:40:01</text><text x="199" y="563" textLength="101" lengthAdjust="spacingAndGlyphs">boom 900 ind...</text><text x="313.500" y="563" textLength="79" lengthAdjust="spacingAndGlyphs">5366131074</text><text class="r" x="470.600" y="563">buy</text><text class="r" x="601" y="563">0.2</text><text class="r" x="733" y="563">8820.631</text><text class="r" x="864" y="563">8789.631</text><text class="r" x="994.700" y="563">8840.631</text><text class="r" x="1169.400" y="563">2025.05.15 05:18:59</text><text class="r" x="1300" y="563">8854.357</text><text class="r p" x="1444.600" y="563">6.75</text><text class="r p" x="1569.800" y="563">0.38 %</text><text x="1648" y="563" textLength="257" lengthAdjust="spacingAndGlyphs">US30_MODFY_VYOM DEV_MT5 EA (303</text>

<!-- summary -->
<circle cx="29" cy="582" r="6" fill="none" stroke="#222" stroke-width="1.200"/><path d="M25.500 582h7M29 578.500v7" stroke="#222" stroke-width="1.200"/>
<text class="b" x="45.700" y="587" textLength="87" lengthAdjust="spacingAndGlyphs">Profit: 26.37</text>
<text class="b" x="141.600" y="587" textLength="80" lengthAdjust="spacingAndGlyphs">Credit: 0.00</text>
<text class="b" x="231" y="587" textLength="91.400" lengthAdjust="spacingAndGlyphs">Deposit: 0.00</text>
<text class="b" x="331.400" y="587" textLength="119.600" lengthAdjust="spacingAndGlyphs">Withdrawal: 0.00</text>
<text class="b" x="460" y="587" textLength="100.400" lengthAdjust="spacingAndGlyphs">Balance: 26.37</text>
<text class="b" x="1405.600" y="587" textLength="38.200" lengthAdjust="spacingAndGlyphs">26.87</text>

<!-- highlighter marks -->
<g style="mix-blend-mode:multiply">
<g transform="translate(0,385) scale(0.40816,0.33333)">
<path fill="#ffe600" d="M442 205L850 185V225L770 238L540 252L470 290L460 310L555 405L530 490L525 552H490L525 405L435 340V295L465 250L442 248Z"/>
<path fill="#ffff00" d="M490 552H525V570H705V612L515 616L490 605Z"/>
</g>
<g transform="translate(1280,385) scale(0.40625,0.33333)">
<path fill="#f2ee00" d="M320 195H370L368 240L370 268L385 300L393 360V420L375 495L355 550V580H333V550L360 470L375 400L370 330L345 297H305L303 440H289L297 297L280 295V243L312 232Z"/>
<path fill="#ffff00" d="M168 575H425V618H168Z"/>
</g>
</g>
</svg>
</body></html>
